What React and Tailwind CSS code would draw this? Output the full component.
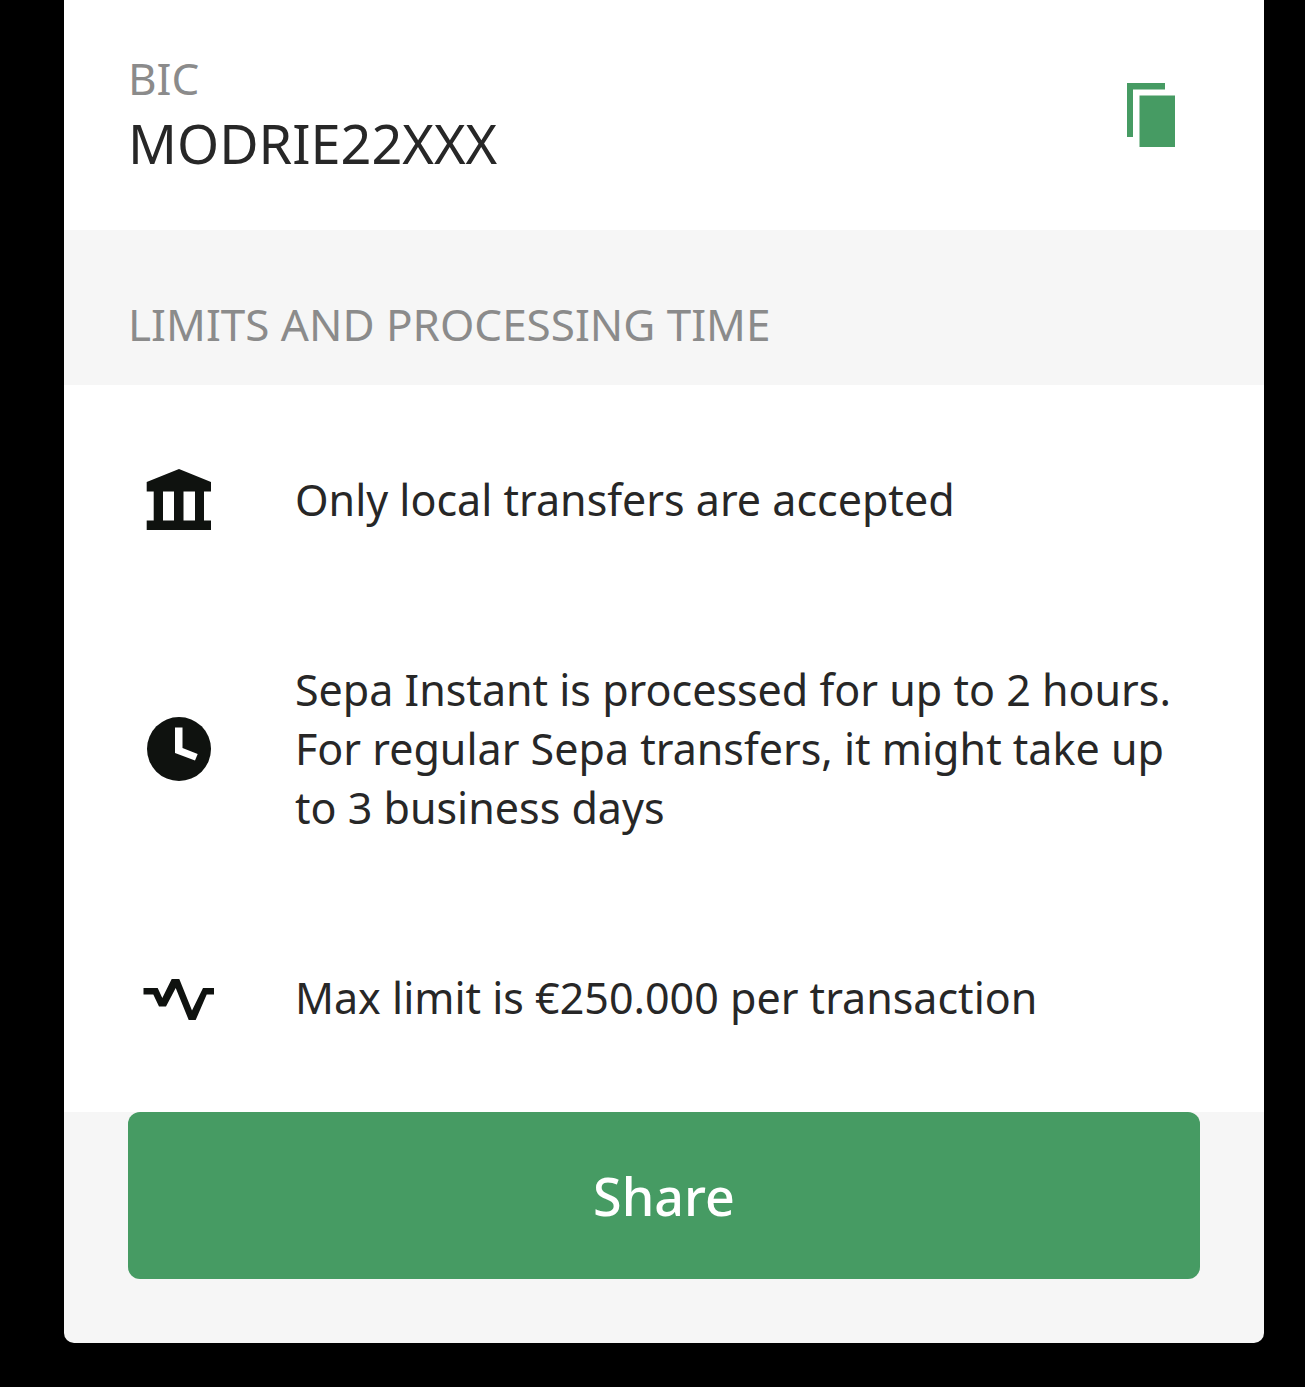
const rows = [
  { icon: 'bank', text: 'Only local transfers are accepted' },
  { icon: 'clock', text: 'Sepa Instant is processed for up to 2 hours. For regular Sepa transfers, it might take up to 3 business days' },
  { icon: 'pulse', text: 'Max limit is €250.000 per transaction' },
];

function Icon({ name }) {
  return (
    <svg viewBox="0 0 80 80" className="h-20 w-20 shrink-0 text-[#0f120f]" fill="currentColor" aria-hidden="true">
      {name === 'bank' && (
        <path
          d="M40 9 72 22V31.5H65V60.5H72V70H7.7V60.5H14.7V31.5H7.7V22ZM24 31.5V60.5H35V31.5ZM44.5 31.5V60.5H56V31.5Z"
          fillRule="evenodd"
        />
      )}
      {name === 'clock' && (
        <>
          <circle cx="40" cy="40" r="32" />
          <path d="M36 18.5H43.5V39L58.7 45 56 51.5 36 44Z" fill="white" />
        </>
      )}
      {name === 'pulse' && (
        <path d="M4.5 30H18.7L23.3 40 32.7 21H40.3L53 52.5 64 30H75V36.5H67.7L56.7 62H49.7L36.7 30 27 48.5H20L14.3 36.5H4.5Z" />
      )}
    </svg>
  );
}

export default function App() {
  return (
    <div className="min-h-screen bg-black pr-[41px] pb-11 pl-16 font-['Noto_Sans',sans-serif] text-[#272727]">
      <main className="overflow-hidden rounded-b-[10px] bg-[#f6f6f6]">
        <section className="flex items-center justify-between bg-white px-16 pt-[46px] pb-[54px]">
          <div>
            <p className="text-[44px] leading-16 text-[#8b8b8b]">BIC</p>
            <p className="text-[54px] leading-[66px]">MODRIE22XXX</p>
          </div>
          <button type="button" aria-label="Copy BIC" className="mr-6 pt-2 text-[#469b63]">
            <svg viewBox="0 0 50 64" className="h-16 w-[50px]" fill="currentColor" aria-hidden="true">
              <path d="M1 0H39V6.5H7V54H1ZM13.5 12.5H49V64H13.5Z" />
            </svg>
          </button>
        </section>
        <h2 className="px-16 pt-[62px] pb-[29px] text-[44px] leading-16 text-[#8b8b8b]">LIMITS AND PROCESSING TIME</h2>
        <ul className="bg-white">
          {rows.map((row) => (
            <li key={row.icon} className="flex min-h-[229px] items-center gap-[76px] py-[46px] pr-16 pl-[75px]">
              <Icon name={row.icon} />
              <span className="text-[43px] leading-[59px]">{row.text}</span>
            </li>
          ))}
        </ul>
        <div className="px-16 pb-16">
          <button type="button" className="h-[167px] w-full rounded-[12px] bg-[#469b63] text-[52px] font-medium text-white">
            Share
          </button>
        </div>
      </main>
    </div>
  );
}
